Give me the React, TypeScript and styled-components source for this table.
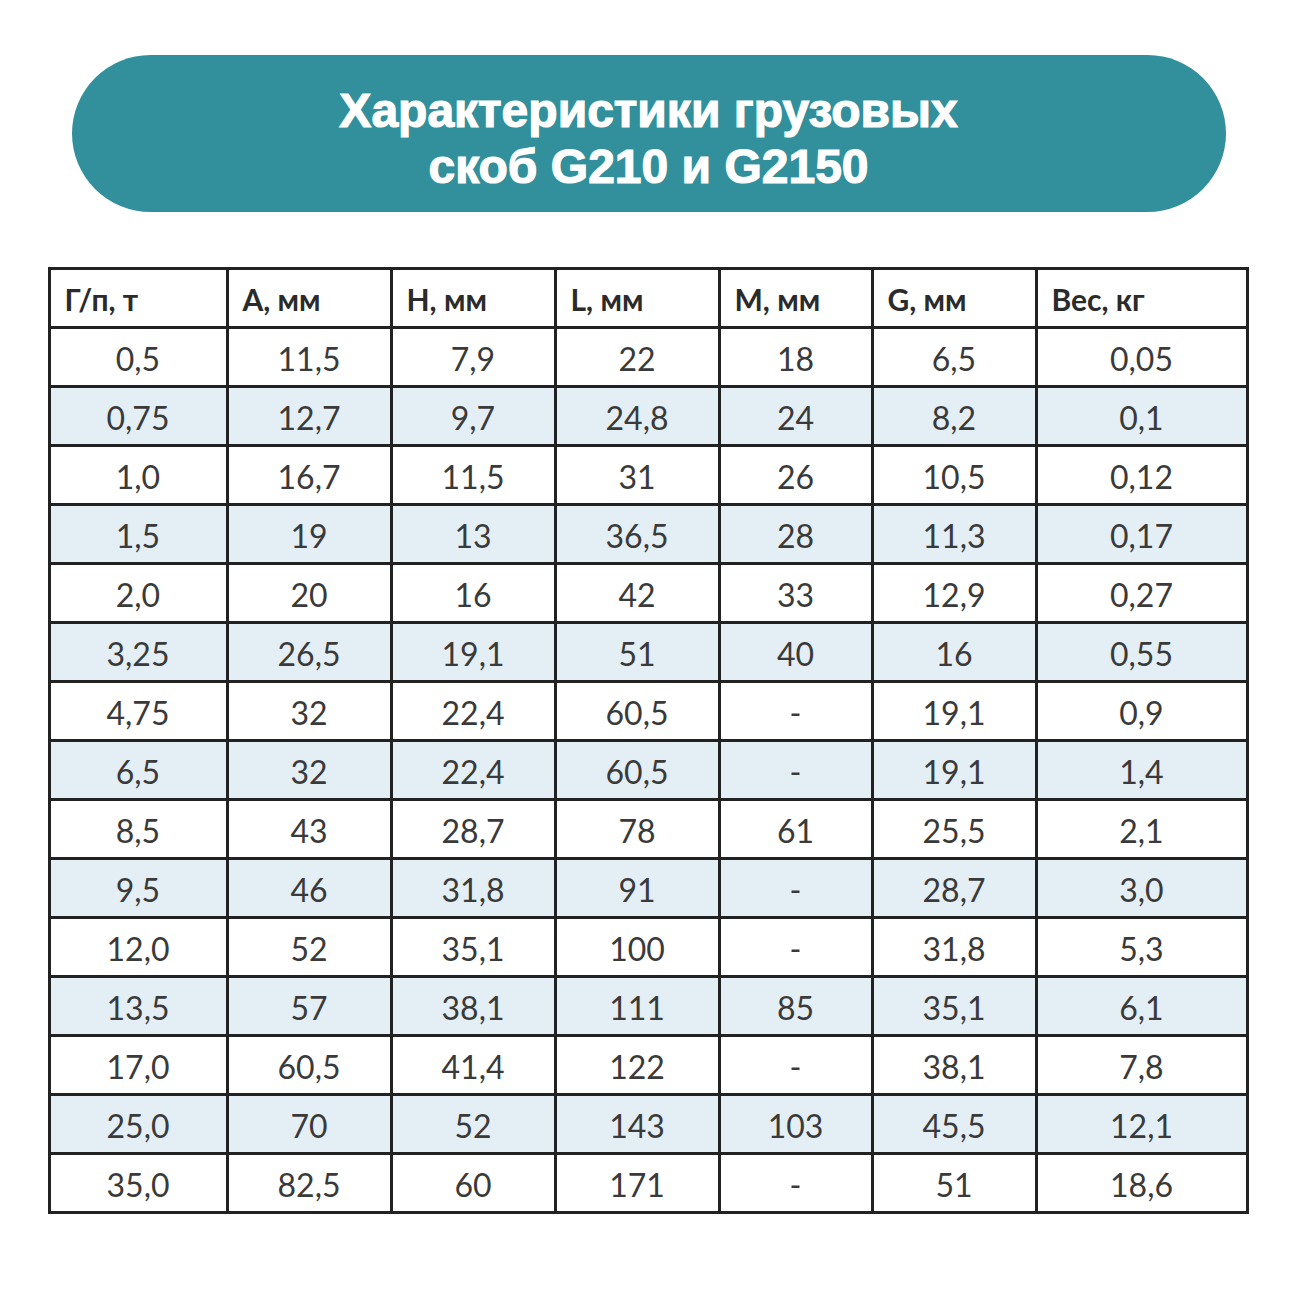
import styled, { createGlobalStyle } from "styled-components";

const GlobalStyle = createGlobalStyle`
  html, body {
    margin: 0;
    padding: 0;
    background: #ffffff;
  }
`;

const Page = styled.div`
  width: 1299px;
  height: 1299px;
  box-sizing: border-box;
  padding: 55px 0 0;
  display: flex;
  flex-direction: column;
  align-items: center;
  background: #ffffff;
`;

const TitleBar = styled.div`
  width: 1154px;
  height: 157px;
  margin-left: -2px;
  box-sizing: border-box;
  padding-top: 10px;
  border-radius: 79px;
  background: #31909b;
  display: flex;
  align-items: center;
  justify-content: center;
`;

const Title = styled.h1`
  margin: 0;
  color: #ffffff;
  font-family: "Liberation Sans", Arial, sans-serif;
  font-weight: 700;
  font-size: 48px;
  line-height: 56px;
  text-align: center;
  -webkit-text-stroke: 1.2px #ffffff;
`;

const Table = styled.table`
  margin: 55px 0 0 -3px;
  border-collapse: collapse;
  table-layout: fixed;
  width: 1198px;
  font-family: "Lato", "Open Sans", sans-serif;
  color: #333333;
`;

const HeadCell = styled.th<{ $w: number }>`
  width: ${(p) => p.$w}px;
  height: 59px;
  box-sizing: border-box;
  border: 3px solid #222222;
  padding: 2px 0 0 14px;
  text-align: left;
  font-weight: 700;
  font-size: 30px;
  color: #2b2b2b;
`;

const Row = styled.tr<{ $striped: boolean }>`
  background: ${(p) => (p.$striped ? "#e4eef5" : "#ffffff")};
`;

const Cell = styled.td`
  height: 59px;
  box-sizing: border-box;
  border: 3px solid #222222;
  padding: 2px 0 0;
  text-align: center;
  font-size: 32px;
  color: #3a3a3a;
`;

const columns: [string, number][] = [
  ["Г/п, т", 178],
  ["А, мм", 164],
  ["Н, мм", 164],
  ["L, мм", 164],
  ["М, мм", 153],
  ["G, мм", 164],
  ["Вес, кг", 211],
];

const rows: string[][] = [
  ["0,5", "11,5", "7,9", "22", "18", "6,5", "0,05"],
  ["0,75", "12,7", "9,7", "24,8", "24", "8,2", "0,1"],
  ["1,0", "16,7", "11,5", "31", "26", "10,5", "0,12"],
  ["1,5", "19", "13", "36,5", "28", "11,3", "0,17"],
  ["2,0", "20", "16", "42", "33", "12,9", "0,27"],
  ["3,25", "26,5", "19,1", "51", "40", "16", "0,55"],
  ["4,75", "32", "22,4", "60,5", "-", "19,1", "0,9"],
  ["6,5", "32", "22,4", "60,5", "-", "19,1", "1,4"],
  ["8,5", "43", "28,7", "78", "61", "25,5", "2,1"],
  ["9,5", "46", "31,8", "91", "-", "28,7", "3,0"],
  ["12,0", "52", "35,1", "100", "-", "31,8", "5,3"],
  ["13,5", "57", "38,1", "111", "85", "35,1", "6,1"],
  ["17,0", "60,5", "41,4", "122", "-", "38,1", "7,8"],
  ["25,0", "70", "52", "143", "103", "45,5", "12,1"],
  ["35,0", "82,5", "60", "171", "-", "51", "18,6"],
];

const App = () => {
  return (
    <Page>
      <GlobalStyle />
      <TitleBar>
        <Title>
          Характеристики грузовых
          <br />
          скоб G210 и G2150
        </Title>
      </TitleBar>
      <Table>
        <thead>
          <tr>
            {columns.map(([name, w]) => (
              <HeadCell key={name} $w={w}>
                {name}
              </HeadCell>
            ))}
          </tr>
        </thead>
        <tbody>
          {rows.map((row, i) => (
            <Row key={i} $striped={i % 2 === 1}>
              {row.map((v, j) => (
                <Cell key={j}>{v}</Cell>
              ))}
            </Row>
          ))}
        </tbody>
      </Table>
    </Page>
  );
};

export default App;
